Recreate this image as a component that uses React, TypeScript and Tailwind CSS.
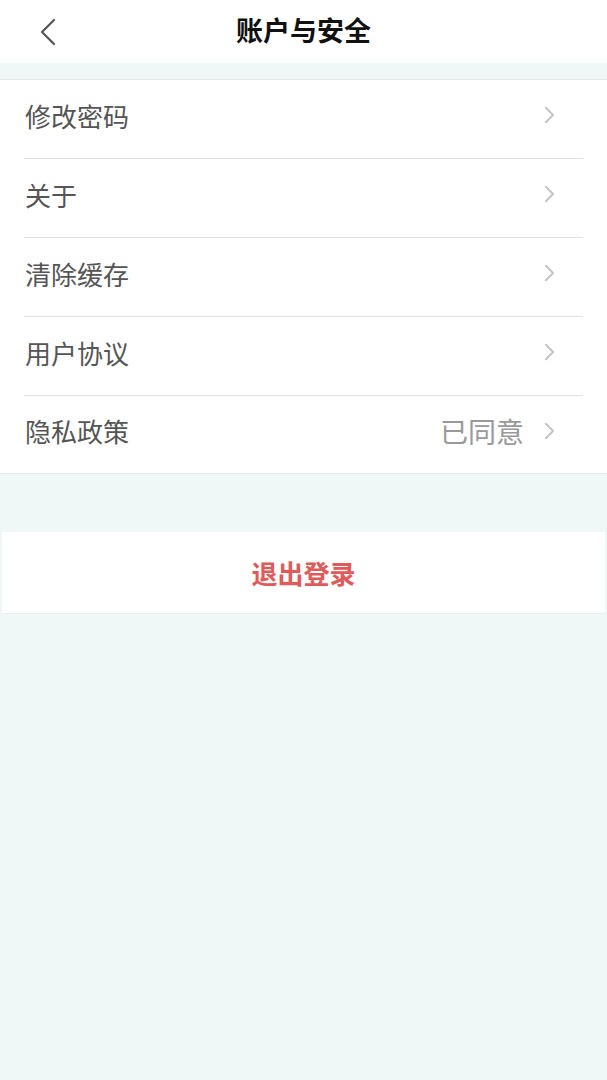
import React from 'react'

const items = [
  { label: '修改密码', value: '' },
  { label: '关于', value: '' },
  { label: '清除缓存', value: '' },
  { label: '用户协议', value: '' },
  { label: '隐私政策', value: '已同意' },
]

const Chevron = ({ className }: { className?: string }) => (
  <svg viewBox="0 0 12 20" className={className} fill="none" stroke="currentColor" strokeWidth="2.2" strokeLinecap="round" strokeLinejoin="round">
    <path d="M2 2l8 8-8 8" />
  </svg>
)

const App = () => {
  return (
    <div className="min-h-[1080px] w-full bg-[#f0f8f7] font-['Noto_Sans_CJK_SC','Noto_Sans',sans-serif]">
      <div className="relative flex h-[63px] items-center justify-center bg-white">
        <button className="absolute left-[38px] top-[18px] text-[#555]">
          <svg viewBox="0 0 20 28" className="h-[28px] w-[20px]" fill="none" stroke="currentColor" strokeWidth="2.2" strokeLinecap="round" strokeLinejoin="round">
            <path d="M16 2L4 14l12 12" />
          </svg>
        </button>
        <h1 className="pb-[2px] text-[27px] font-bold text-[#111]">账户与安全</h1>
      </div>
      <div className="mt-[16px] border-y border-[#e3e6e6] bg-white">
        {items.map((item, i) => (
          <div key={item.label} className="pl-[24px] pr-[24px]">
            <div className={`flex items-center pb-[8px] ${i < items.length - 1 ? 'h-[79px] border-b border-[#e2e2e2]' : 'h-[77px]'}`}>
              <span className="flex-1 pl-[1px] text-[26px] text-[#555]">{item.label}</span>
              {item.value && <span className="mr-[20px] text-[28px] text-[#999]">{item.value}</span>}
              <Chevron className="mr-[28px] h-[18px] w-[11px] text-[#c4c4c4]" />
            </div>
          </div>
        ))}
      </div>
      <div className="mx-[2px] mt-[58px] flex h-[82px] items-center justify-center border-b border-[#eaeef0] bg-white">
        <span className="text-[26px] font-bold text-[#e05a5a]">退出登录</span>
      </div>
    </div>
  )
}

export default App
